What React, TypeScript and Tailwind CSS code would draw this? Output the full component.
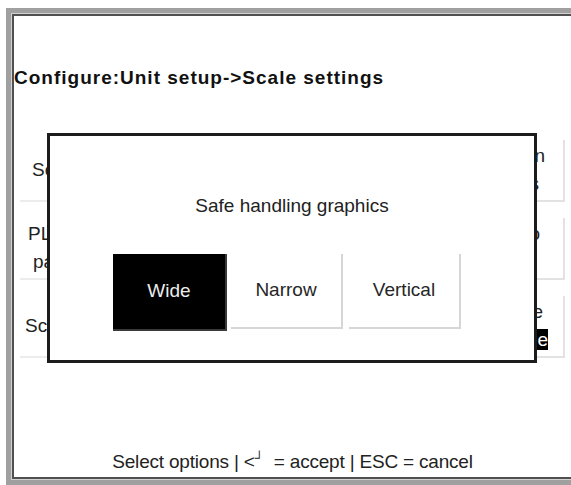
import React from "react";

const leftButtons = [
  { lines: [{ text: "Scale settings", pad: "pl-[12px]" }] },
  {
    lines: [
      { text: "PLU display", pad: "pl-[8px]" },
      { text: "parameters", pad: "pl-[13px]" },
    ],
  },
  { lines: [{ text: "Scale type setup", pad: "pl-[5px]" }] },
];

const rightButtons = [
  {
    lines: [
      { text: "Calibration", pad: "pr-[18px]", inv: false },
      { text: "settings", pad: "pr-[24px]", inv: false },
    ],
  },
  {
    lines: [
      { text: "Setup info", pad: "pr-[23px]", inv: false },
      { text: "help", pad: "pr-[40px]", inv: false },
    ],
  },
  {
    lines: [
      { text: "Print the table", pad: "pr-[20px]", inv: false },
      { text: "Safe handle", pad: "pr-[15px]", inv: true },
    ],
  },
];

function ChoiceButton({ label, active }: { label: string; active?: boolean }) {
  if (active) {
    return (
      <div className="flex h-[77px] w-[114px] items-center justify-center border-r-2 border-b-2 border-[#3a3a3a] bg-black text-[#ececec]">
        {label}
      </div>
    );
  }
  return (
    <div className="flex h-[75px] w-[112px] items-center justify-center border-r-2 border-b-2 border-[#d6d6d6] bg-white text-[#262626]">
      {label}
    </div>
  );
}

export default function App() {
  return (
    <div className="relative h-[485px] w-[571px] overflow-hidden bg-white pt-[8px] pl-[6px] font-['Liberation_Sans',Arial,sans-serif] text-[19px] text-[#222]">
      {/* window frame */}
      <div className="h-[477px] w-[600px] border-t-[5px] border-b-[5px] border-l-[5px] border-[#a0a0a0]">
        <div className="h-full border border-[#d2d2d2]">
          <div className="flex h-full flex-col border-2 border-[#505050] bg-white">
            <div className="pt-[51px] font-bold leading-[22px] tracking-[1px] text-[#111]">
              Configure:Unit setup-&gt;Scale settings
            </div>

            {/* menu buttons behind the popup */}
            <div className="mt-[51px] flex w-[551px] justify-between pl-[6px]">
              <div className="flex w-[142px] flex-col gap-[16px]">
                {leftButtons.map((b, i) => (
                  <div
                    key={i}
                    className="flex h-[62px] flex-col justify-center border-r-2 border-b-2 border-[#ececec] leading-[28px] whitespace-nowrap"
                  >
                    {b.lines.map((l) => (
                      <div key={l.text} className={l.pad}>
                        {l.text}
                      </div>
                    ))}
                  </div>
                ))}
              </div>
              <div className="flex w-[143px] flex-col gap-[16px]">
                {rightButtons.map((b, i) => (
                  <div
                    key={i}
                    className="flex h-[62px] flex-col items-end justify-center border-r-2 border-b-2 border-[#e2e2e2] leading-[28px] whitespace-nowrap"
                  >
                    {b.lines.map((l) => (
                      <div key={l.text} className={l.pad}>
                        <span className={l.inv ? "bg-black text-white" : ""}>{l.text}</span>
                      </div>
                    ))}
                  </div>
                ))}
              </div>
            </div>

            <div className="mt-auto pr-[32px] pb-[2px] text-center leading-[22px] tracking-[-0.2px] text-[#222]">
              Select options | &lt;<span className="relative -top-[6px] text-[13px]">┘</span>&nbsp; = accept | ESC = cancel
            </div>
          </div>
        </div>
      </div>

      {/* popup */}
      <div className="absolute top-[133px] left-[47px] h-[230px] w-[490px] border-[3px] border-[#1c1c1c] bg-white">
        <div className="pt-[56px] text-center leading-[28px] text-[#222]">Safe handling graphics</div>
        <div className="mt-[34px] flex items-start pl-[63px]">
          <ChoiceButton label="Wide" active />
          <div className="ml-[4px]">
            <ChoiceButton label="Narrow" />
          </div>
          <div className="ml-[6px]">
            <ChoiceButton label="Vertical" />
          </div>
        </div>
      </div>
    </div>
  );
}
